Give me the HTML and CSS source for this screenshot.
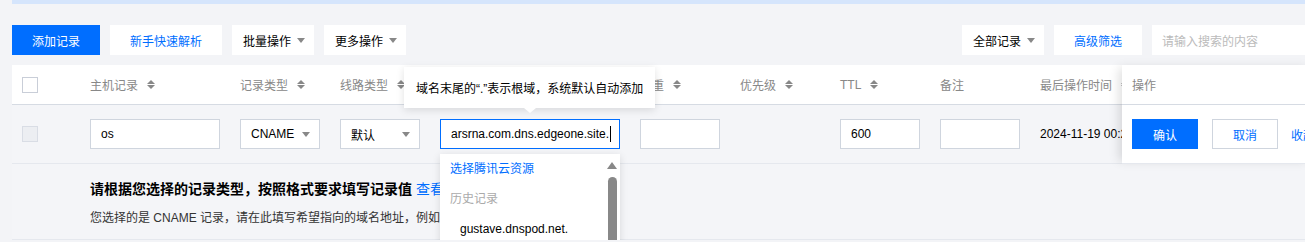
FILE: index.html
```html
<!DOCTYPE html>
<html lang="zh-CN">
<head>
<meta charset="utf-8">
<title>记录管理</title>
<link rel="stylesheet" href="styles.css">
</head>
<body>
<div class="topband"></div>
<div class="toolbar">
  <div class="group">
    <button class="btn primary">添加记录</button>
    <button class="btn link">新手快速解析</button>
    <button class="btn drop">批量操作<span class="caret"></span></button>
    <button class="btn drop">更多操作<span class="caret"></span></button>
  </div>
  <div class="group">
    <button class="btn drop">全部记录<span class="caret"></span></button>
    <button class="btn link">高级筛选</button>
    <div class="search">请输入搜索的内容</div>
  </div>
</div>

<div class="table">
  <div class="main">
    <div class="scroll">
      <div class="row head">
        <div class="cell c-check"><span class="checkbox"></span></div>
        <div class="cell c-host">主机记录<span class="sort"></span></div>
        <div class="cell c-type">记录类型<span class="sort"></span></div>
        <div class="cell c-line">线路类型<span class="sort"></span></div>
        <div class="cell c-value">记录值</div>
        <div class="cell c-weight">权重<span class="sort"></span></div>
        <div class="cell c-prio">优先级<span class="sort"></span></div>
        <div class="cell c-ttl">TTL<span class="sort"></span></div>
        <div class="cell c-note">备注</div>
        <div class="cell c-time">最后操作时间<span class="sort"></span></div>
      </div>
      <div class="row body">
        <div class="cell c-check"><span class="checkbox disabled"></span></div>
        <div class="cell c-host"><div class="input w130">os</div></div>
        <div class="cell c-type"><div class="select">CNAME<span class="caret"></span></div></div>
        <div class="cell c-line"><div class="select">默认<span class="caret"></span></div></div>
        <div class="cell c-value"><div class="input w180 focus">arsrna.com.dns.edgeone.site.<span class="cursor"></span></div></div>
        <div class="cell c-weight"><div class="input w80"></div></div>
        <div class="cell c-prio"></div>
        <div class="cell c-ttl"><div class="input w80">600</div></div>
        <div class="cell c-note"><div class="input w80"></div></div>
        <div class="cell c-time"><span class="time">2024-11-19 00:20:15</span></div>
      </div>
    </div>
    <div class="fixed">
      <div class="fhead">操作</div>
      <div class="fbody">
        <button class="btn primary sm">确认</button>
        <button class="btn outline sm">取消</button>
        <span class="collapse">收起</span>
      </div>
    </div>
  </div>
  <div class="expand">
    <p class="tip-title">请根据您选择的记录类型，按照格式要求填写记录值 <a class="more">查看示例</a></p>
    <p class="tip-desc">您选择的是 CNAME 记录，请在此填写希望指向的域名地址，例如：www.example.com.</p>
  </div>

  <div class="tooltip">域名末尾的“.”表示根域，系统默认自动添加</div>

  <div class="dropdown">
    <div class="ditem blue">选择腾讯云资源</div>
    <div class="ditem gray">历史记录</div>
    <div class="ditem sub">gustave.dnspod.net.</div>
    <div class="ditem sub">example.dnspod.net.</div>
    <div class="scrollbar"><span class="arrow"></span><span class="thumb"></span></div>
  </div>
</div>
</body>
</html>
```

FILE: styles.css
```css
html, body {
  margin: 0;
  padding: 0;
  overflow: hidden;
  background: #f3f4f7;
  font-family: "Liberation Sans", "Noto Sans CJK SC", Arial, sans-serif;
  font-size: 12px;
  color: #000;
}

.topband {
  margin-left: 12px;
  height: 4px;
  background: #d5e5fc;
}

.toolbar {
  display: flex;
  justify-content: space-between;
  padding: 21px 0 0 12px;
  height: 30px;
}

.group {
  display: flex;
  gap: 10px;
}

.btn {
  height: 30px;
  border: none;
  margin: 0;
  padding: 0 20px;
  background: #fff;
  font-family: inherit;
  font-size: 12px;
  color: #000;
  display: flex;
  align-items: center;
  box-sizing: border-box;
  cursor: pointer;
}

.btn.primary {
  background: #006eff;
  color: #fff;
}

.btn.link {
  color: #006eff;
}

.btn.drop {
  padding: 0 9px 0 11px;
  gap: 6px;
}

.caret {
  display: inline-block;
  width: 0;
  height: 0;
  border-left: 4px solid transparent;
  border-right: 4px solid transparent;
  border-top: 5px solid #888;
}

.search {
  width: 153px;
  height: 30px;
  background: #fff;
  color: #bbb;
  padding-left: 10px;
  display: flex;
  align-items: center;
  box-sizing: border-box;
}

.table {
  position: relative;
  margin: 10px 0 0 12px;
}

.main {
  display: flex;
}

.scroll {
  width: 1110px;
  overflow: hidden;
  flex: none;
}

.row {
  display: flex;
  white-space: nowrap;
}

.row.head {
  height: 39px;
  background: #fff;
  border-bottom: 1px solid #d6dbe3;
  color: #888;
}

.row.body {
  height: 58px;
  background: #f4f5f8;
  border-bottom: 1px solid #e5e8ee;
}

.cell {
  flex: none;
  display: flex;
  align-items: center;
  box-sizing: border-box;
}

.c-check { width: 78px; padding-left: 10px; }
.c-host { width: 150px; }
.c-type { width: 100px; }
.c-line { width: 100px; }
.c-value { width: 200px; }
.c-weight { width: 100px; }
.c-prio { width: 100px; }
.c-ttl { width: 100px; }
.c-note { width: 100px; }
.c-time { width: 200px; }

.sort {
  display: inline-block;
  width: 8px;
  height: 9px;
  margin-left: 9px;
  position: relative;
}
.sort::before, .sort::after {
  content: "";
  position: absolute;
  left: 0;
  width: 0;
  height: 0;
  border-left: 4px solid transparent;
  border-right: 4px solid transparent;
}
.sort::before {
  top: 0;
  border-bottom: 4px solid #888;
}
.sort::after {
  bottom: 0;
  border-top: 4px solid #888;
}

.checkbox {
  width: 16px;
  height: 16px;
  box-sizing: border-box;
  border: 1px solid #c9ced8;
  background: #fff;
}
.checkbox.disabled {
  background: #eceef2;
  border-color: #d9dde5;
}

.input, .select {
  height: 30px;
  box-sizing: border-box;
  border: 1px solid #cfd5de;
  background: #fff;
  display: flex;
  align-items: center;
  padding-left: 10px;
  color: #000;
}
.w130 { width: 130px; }
.w180 { width: 180px; }
.w80 { width: 80px; }

.input.focus {
  border-color: #006eff;
}

.cursor {
  display: inline-block;
  width: 1px;
  height: 16px;
  background: #000;
  margin-left: 1px;
}

.select {
  width: 80px;
  justify-content: space-between;
  padding-right: 9px;
}

.time {
  color: #000;
}

.fixed {
  flex: 1;
  background: #fff;
  box-shadow: -6px 0 10px -3px rgba(0, 0, 0, 0.13);
  position: relative;
  z-index: 1;
}

.fhead {
  height: 39px;
  border-bottom: 1px solid #d6dbe3;
  color: #888;
  display: flex;
  align-items: center;
  padding-left: 10px;
}

.fbody {
  height: 58px;
  border-bottom: 1px solid #e5e8ee;
  display: flex;
  align-items: center;
  padding-left: 10px;
  white-space: nowrap;
}

.btn.sm {
  width: 66px;
  padding: 0;
  justify-content: center;
  flex: none;
}

.btn.outline {
  border: 1px solid #cfd5de;
  color: #006eff;
  margin-left: 14px;
}

.collapse {
  color: #006eff;
  margin-left: 13px;
}

.expand {
  height: 76px;
  background: #f4f5f8;
  border-bottom: 1px solid #e5e8ee;
  padding-left: 78px;
  box-sizing: border-box;
  overflow: hidden;
  white-space: nowrap;
}

.tip-title {
  margin: 0;
  padding-top: 15px;
  font-size: 14px;
  font-weight: bold;
  line-height: 20px;
}

.more {
  color: #006eff;
  font-weight: normal;
}

.tip-desc {
  margin: 10px 0 0;
  font-size: 12px;
  line-height: 18px;
  color: #333;
}

.tooltip {
  position: absolute;
  left: 392px;
  top: 2px;
  width: 251px;
  height: 41px;
  box-sizing: border-box;
  background: #fff;
  box-shadow: 0 2px 8px rgba(0, 0, 0, 0.12);
  padding-left: 12px;
  display: flex;
  align-items: center;
  z-index: 3;
  white-space: nowrap;
}
.tooltip::after {
  content: "";
  position: absolute;
  left: 120px;
  bottom: -5px;
  width: 0;
  height: 0;
  border-left: 6px solid transparent;
  border-right: 6px solid transparent;
  border-top: 5px solid #fff;
}

.dropdown {
  position: absolute;
  left: 428px;
  top: 89px;
  width: 180px;
  height: 130px;
  background: #fff;
  box-shadow: 0 2px 8px rgba(0, 0, 0, 0.12);
  z-index: 3;
  overflow: hidden;
}

.ditem {
  height: 30px;
  line-height: 30px;
  padding-left: 10px;
  white-space: nowrap;
}
.ditem.blue { color: #006eff; }
.ditem.gray { color: #aaa; }
.ditem.sub { padding-left: 20px; color: #000; }

.scrollbar {
  position: absolute;
  right: 3px;
  top: 0;
  width: 10px;
  height: 100%;
  display: flex;
  flex-direction: column;
  align-items: center;
}
.scrollbar .arrow {
  margin-top: 8px;
  width: 0;
  height: 0;
  border-left: 5px solid transparent;
  border-right: 5px solid transparent;
  border-bottom: 7px solid #888;
}
.scrollbar .thumb {
  margin-top: 8px;
  width: 9px;
  flex: 1;
  background: #888;
  border-radius: 5px 5px 0 0;
}
```
